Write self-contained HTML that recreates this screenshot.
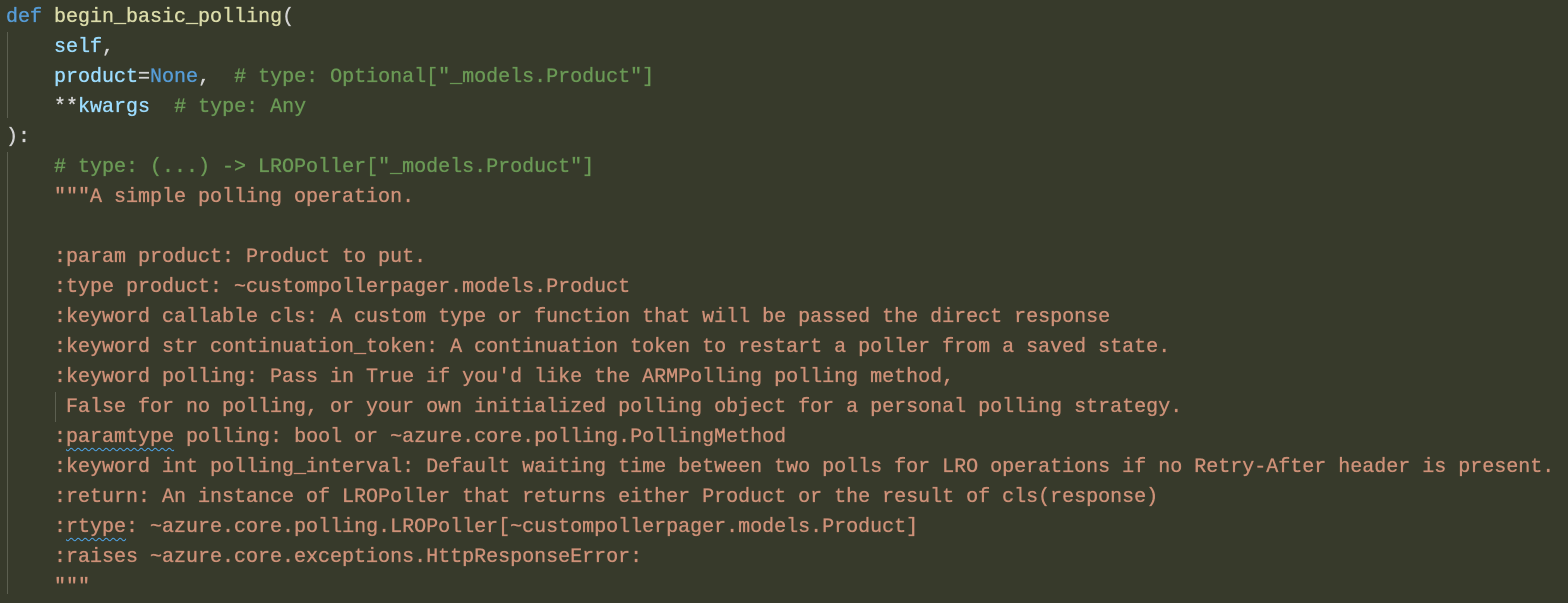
<!DOCTYPE html>
<html><head><meta charset="utf-8"><style>
body{margin:0;background:#373a2b;width:1568px;height:594px;overflow:hidden;position:relative}
pre{margin:0;position:absolute;left:6px;top:3px;font-family:"Liberation Mono",monospace;font-size:20px;line-height:30px;color:#ce9178;white-space:pre;-webkit-text-stroke:0.35px currentColor}
.k{color:#569cd6}.f{color:#dcdcaa}.p{color:#9cdcfe}.c{color:#6a9955}.w{color:#d4d4d4}
.sq{text-decoration:underline wavy #4fa6e8;text-decoration-thickness:1px;text-underline-offset:5px}
.g{position:absolute;left:7px;width:1px;background:#5c5f50}
</style></head><body>
<div class="g" style="top:32px;height:86px"></div>
<div class="g" style="top:152px;height:442px"></div>
<div class="g" style="left:55px;top:392px;height:30px"></div>
<pre><span class="k">def</span> <span class="f">begin_basic_polling</span><span class="w">(</span>
    <span class="p">self</span><span class="w">,</span>
    <span class="p">product</span><span class="w">=</span><span class="k">None</span><span class="w">,</span>  <span class="c"># type: Optional["_models.Product"]</span>
    <span class="w">**</span><span class="p">kwargs</span>  <span class="c"># type: Any</span>
<span class="w">):</span>
    <span class="c"># type: (...) -&gt; LROPoller["_models.Product"]</span>
    """A simple polling operation.

    :param product: Product to put.
    :type product: ~custompollerpager.models.Product
    :keyword callable cls: A custom type or function that will be passed the direct response
    :keyword str continuation_token: A continuation token to restart a poller from a saved state.
    :keyword polling: Pass in True if you'd like the ARMPolling polling method,
     False for no polling, or your own initialized polling object for a personal polling strategy.
    :<span class="sq">paramtype</span> polling: bool or ~azure.core.polling.PollingMethod
    :keyword int polling_interval: Default waiting time between two polls for LRO operations if no Retry-After header is present.
    :return: An instance of LROPoller that returns either Product or the result of cls(response)
    :<span class="sq">rtype</span>: ~azure.core.polling.LROPoller[~custompollerpager.models.Product]
    :raises ~azure.core.exceptions.HttpResponseError:
    """</pre>
</body></html>
